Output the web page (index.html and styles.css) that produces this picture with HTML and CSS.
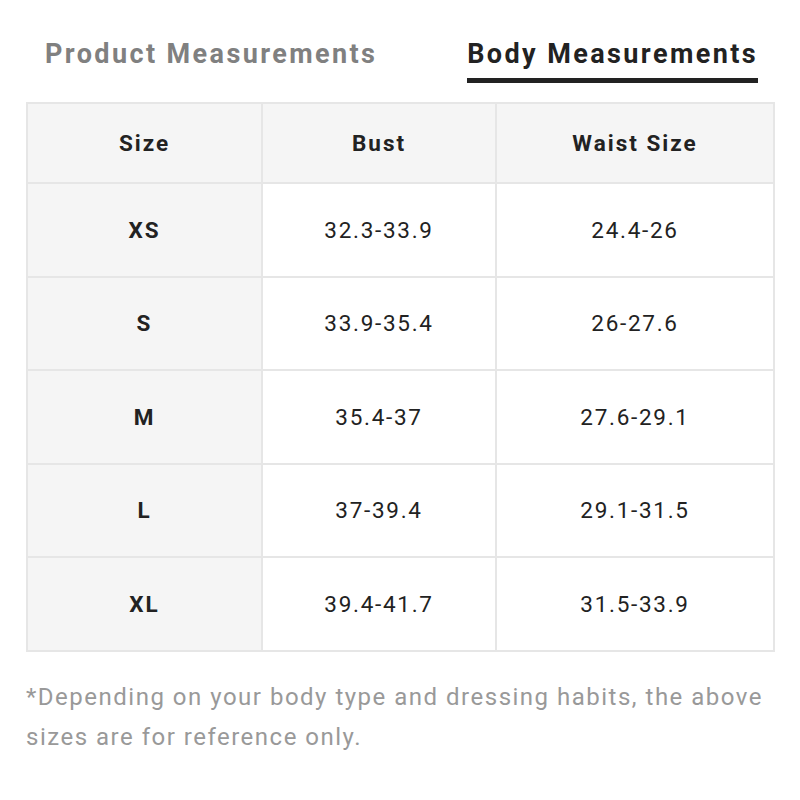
FILE: index.html
```html
<!DOCTYPE html>
<html>
<head>
<meta charset="utf-8">
<link rel="stylesheet" href="styles.css">
</head>
<body>
<div class="page">
  <div class="tabs">
    <div class="tab">Product Measurements</div>
    <div class="tab active">Body Measurements</div>
  </div>
  <table class="chart">
    <thead>
      <tr><th class="c1">Size</th><th class="c2">Bust</th><th class="c3">Waist Size</th></tr>
    </thead>
    <tbody>
      <tr><th>XS</th><td>32.3-33.9</td><td>24.4-26</td></tr>
      <tr><th>S</th><td>33.9-35.4</td><td>26-27.6</td></tr>
      <tr><th>M</th><td>35.4-37</td><td>27.6-29.1</td></tr>
      <tr><th>L</th><td>37-39.4</td><td>29.1-31.5</td></tr>
      <tr><th>XL</th><td>39.4-41.7</td><td>31.5-33.9</td></tr>
    </tbody>
  </table>
  <p class="note">*Depending on your body type and dressing habits, the above sizes are for reference only.</p>
</div>
</body>
</html>
```

FILE: styles.css
```css
html, body {
  margin: 0;
  padding: 0;
  background: #fff;
}
.page {
  width: 748px;
  padding: 0 26px;
  font-family: Roboto, "Liberation Sans", sans-serif;
  color: #222;
}
.tabs {
  display: flex;
  justify-content: space-between;
  padding: 36px 18px 0 19px;
  height: 68px;
  box-sizing: border-box;
}
.tab {
  font-size: 27px;
  font-weight: 700;
  letter-spacing: 2.4px;
  color: #808080;
  line-height: 37px;
  height: 47px;
  box-sizing: border-box;
}
.tab.active {
  color: #222;
  border-bottom: 5px solid #222;
  margin-right: -2px;
}
.chart {
  border-collapse: collapse;
  width: 748px;
  margin-top: 34px;
  table-layout: fixed;
}
.chart th, .chart td {
  border: 2px solid #e6e6e6;
  text-align: center;
  font-size: 22.5px;
  color: #222;
  padding: 0;
}
.chart td {
  font-weight: 400;
  letter-spacing: 1.7px;
  height: 91px;
}
.chart th {
  font-weight: 700;
  letter-spacing: 2px;
  background: #f5f5f5;
}
.chart thead th {
  height: 78px;
}
.chart tbody th {
  height: 91.5px;
}
.c1 { width: 233px; }
.c2 { width: 232px; }
.c3 { width: 276px; }
.note {
  margin: 25px 0 0;
  font-size: 24px;
  letter-spacing: 1.5px;
  line-height: 40px;
  color: #999;
}
```
